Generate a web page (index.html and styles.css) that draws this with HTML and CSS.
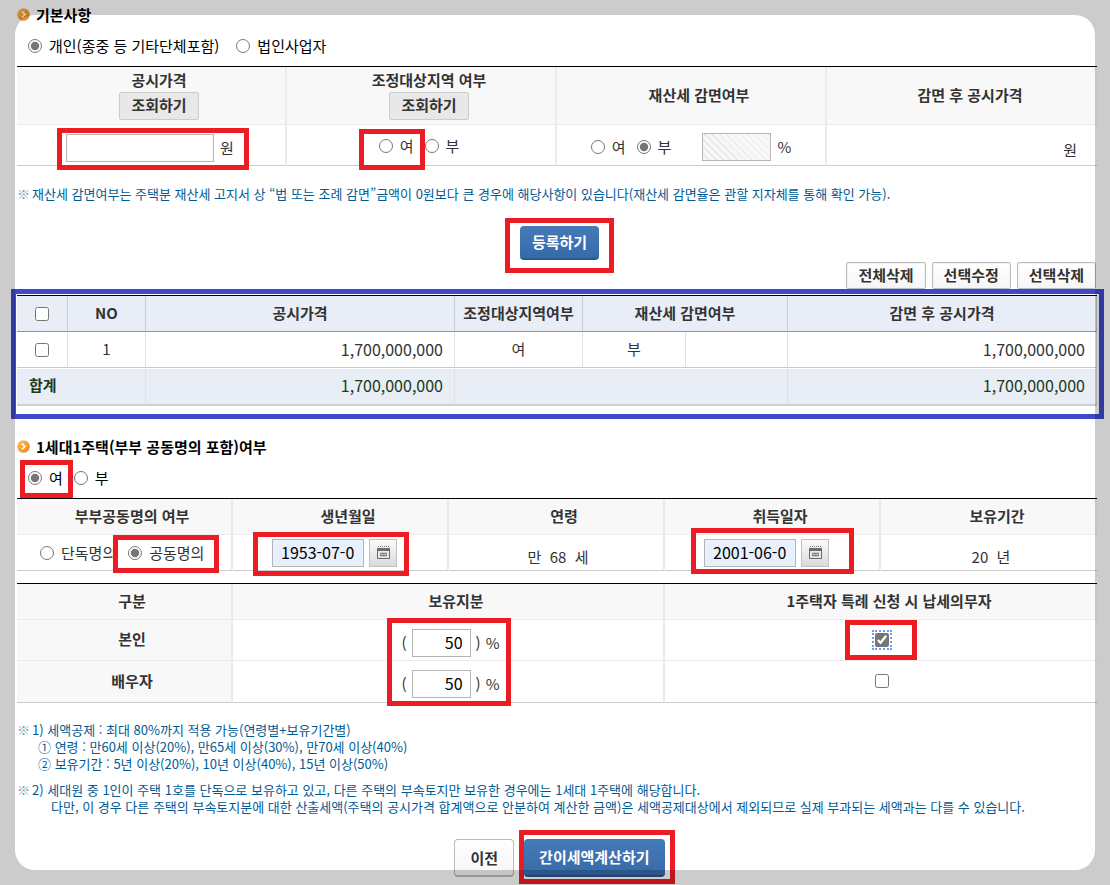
FILE: index.html
```html
<!DOCTYPE html>
<html lang="ko">
<head>
<meta charset="utf-8">
<title>종합부동산세 간이세액계산</title>
<link rel="stylesheet" href="styles.css">
</head>
<body>
<svg class="defs" aria-hidden="true">
  <defs>
    <linearGradient id="orange" x1="0" y1="0" x2="1" y2="1">
      <stop offset="0" stop-color="#ffc35a"/><stop offset="1" stop-color="#ef7f12"/>
    </linearGradient>
    <symbol id="bullet" viewBox="0 0 13 13">
      <circle cx="6.5" cy="6.5" r="6.3" fill="url(#orange)"/>
      <path d="M5 3.6 8 6.5 5 9.4" fill="none" stroke="#fff" stroke-width="1.7"/>
    </symbol>
    <symbol id="calendar" viewBox="0 0 13 13">
      <path d="M1 .5h11" stroke="#777" stroke-dasharray="1 1"/>
      <path fill="#6b6b6b" fill-rule="evenodd" d="M0 2h13v11H0zM1 5v7h11V5z"/>
      <path d="M3 7.500h7M3 9.500h7" stroke="#777" stroke-width="1.500"/>
      <path d="M5 6v5M8 6v5" stroke="#ccc" stroke-width=".5"/>
    </symbol>
  </defs>
</svg>
<main class="page">
  <h2 class="title"><svg class="bullet"><use href="#bullet"/></svg>기본사항</h2>
  <div class="choices">
    <label class="option"><input type="radio" name="owner" checked>개인(종중 등 기타단체포함)</label>
    <label class="option"><input type="radio" name="owner">법인사업자</label>
  </div>

  <table class="grid">
    <thead>
      <tr class="row-head-tall">
        <th><div class="stack">공시가격<button class="btn btn-flat" type="button">조회하기</button></div></th>
        <th><div class="stack">조정대상지역 여부<button class="btn btn-flat" type="button">조회하기</button></div></th>
        <th>재산세 감면여부</th>
        <th>감면 후 공시가격</th>
      </tr>
    </thead>
    <tbody>
      <tr class="row-tall">
        <td class="c-money"><div class="field mark mark-price"><input class="text price" type="text" aria-label="공시가격"><span>원</span></div></td>
        <td class="c-pair"><div class="field pair">
          <label class="option mark mark-area"><input type="radio" name="area">여</label>
          <label class="option"><input type="radio" name="area">부</label></div></td>
        <td class="c-rate"><div class="field reduction">
          <label class="option"><input type="radio" name="cut">여</label>
          <label class="option"><input type="radio" name="cut" checked>부</label>
          <span class="field percent"><input class="text rate" type="text" aria-label="감면율" disabled><span>%</span></span></div></td>
        <td class="unit">원</td>
      </tr>
    </tbody>
  </table>

  <p class="note lead"><span class="ref">※</span>재산세 감면여부는 주택분 재산세 고지서 상 “법 또는 조례 감면”금액이 0원보다 큰 경우에 해당사항이 있습니다(재산세 감면율은 관할 지자체를 통해 확인 가능).</p>

  <div class="actions"><span class="mark mark-add"><button class="btn btn-primary" type="button">등록하기</button></span></div>
  <div class="tools">
    <button class="btn btn-line" type="button">전체삭제</button>
    <button class="btn btn-line" type="button">선택수정</button>
    <button class="btn btn-line" type="button">선택삭제</button>
  </div>

  <div class="mark mark-list">
    <table class="list">
      <colgroup><col class="c-check"><col class="c-no"><col class="c-price"><col class="c-area"><col class="c-cut"><col class="c-cut-rate"><col></colgroup>
      <thead>
        <tr><th><input type="checkbox" aria-label="전체 선택"></th><th>NO</th><th>공시가격</th><th>조정대상지역여부</th><th colspan="2">재산세 감면여부</th><th>감면 후 공시가격</th></tr>
      </thead>
      <tbody>
        <tr><td><input type="checkbox" aria-label="1번 선택"></td><td>1</td><td class="num">1,700,000,000</td><td>여</td><td>부</td><td></td><td class="num">1,700,000,000</td></tr>
      </tbody>
      <tfoot>
        <tr><th colspan="2">합계</th><td class="num">1,700,000,000</td><td colspan="3"></td><td class="num">1,700,000,000</td></tr>
      </tfoot>
    </table>
  </div>

  <h2 class="title second"><svg class="bullet"><use href="#bullet"/></svg>1세대1주택(부부 공동명의 포함)여부</h2>
  <div class="choices tight">
    <label class="option mark mark-single"><input type="radio" name="single" checked>여</label>
    <label class="option"><input type="radio" name="single">부</label>
  </div>

  <table class="grid">
    <thead>
      <tr><th>부부공동명의 여부</th><th>생년월일</th><th>연령</th><th>취득일자</th><th>보유기간</th></tr>
    </thead>
    <tbody>
      <tr>
        <td class="names"><div class="field">
          <label class="option"><input type="radio" name="joint">단독명의</label>
          <label class="option mark mark-joint"><input type="radio" name="joint" checked>공동명의</label></div></td>
        <td class="c-date"><div class="field date mark mark-birth"><input class="text filled" type="text" value="1953-07-01" aria-label="생년월일"><button class="cal" type="button" aria-label="생년월일 달력"><svg><use href="#calendar"/></svg></button></div></td>
        <td class="value">만&nbsp; 68&nbsp; 세</td>
        <td class="c-date"><div class="field date mark mark-buy"><input class="text filled" type="text" value="2001-06-01" aria-label="취득일자"><button class="cal" type="button" aria-label="취득일자 달력"><svg><use href="#calendar"/></svg></button></div></td>
        <td class="value">20&nbsp; 년</td>
      </tr>
    </tbody>
  </table>

  <table class="grid share">
    <colgroup><col class="w1"><col class="w2"><col class="w2"></colgroup>
    <thead>
      <tr><th>구분</th><th>보유지분</th><th>1주택자 특례 신청 시 납세의무자</th></tr>
    </thead>
    <tbody>
      <tr class="row-tall">
        <th>본인</th>
        <td class="c-part"><div class="field part mark mark-part"><span>(</span><input class="text" type="text" value="50" aria-label="본인 보유지분"><span>)</span><span>%</span></div></td>
        <td class="c-payer"><span class="check mark mark-payer"><input class="focused" type="checkbox" checked aria-label="본인 납세의무자"></span></td>
      </tr>
      <tr class="row-tall last">
        <th>배우자</th>
        <td class="c-part"><div class="field part"><span>(</span><input class="text" type="text" value="50" aria-label="배우자 보유지분"><span>)</span><span>%</span></div></td>
        <td class="c-payer"><span class="check"><input type="checkbox" aria-label="배우자 납세의무자"></span></td>
      </tr>
    </tbody>
  </table>

  <div class="note notes">
    <p><span class="ref">※</span>1) 세액공제 : 최대 80%까지 적용 가능(연령별+보유기간별)</p>
    <p class="in1">① 연령 : 만60세 이상(20%), 만65세 이상(30%), 만70세 이상(40%)</p>
    <p class="in1">② 보유기간 : 5년 이상(20%), 10년 이상(40%), 15년 이상(50%)</p>
    <p class="gap"><span class="ref">※</span>2) 세대원 중 1인이 주택 1호를 단독으로 보유하고 있고, 다른 주택의 부속토지만 보유한 경우에는 1세대 1주택에 해당합니다.</p>
    <p class="in2">다만, 이 경우 다른 주택의 부속토지분에 대한 산출세액(주택의 공시가격 합계액으로 안분하여 계산한 금액)은 세액공제대상에서 제외되므로 실제 부과되는 세액과는 다를 수 있습니다.</p>
  </div>

  <div class="actions bottom">
    <button class="btn btn-large" type="button">이전</button>
    <span class="mark mark-calc"><button class="btn btn-primary btn-large" type="button">간이세액계산하기</button></span>
  </div>
</main>
<div class="frame"></div>
</body>
</html>
```
FILE: styles.css
```css
* { box-sizing: border-box; }
body {
  margin: 0;
  background: #fff;
  color: #333;
  font-family: "Noto Sans CJK KR", "Noto Sans", sans-serif;
  font-size: 15px;
  line-height: 20px;
  overflow: hidden;
}
.defs { position: absolute; width: 0; height: 0; }
.page { padding: 5px 13px 8px 17px; }
/* translucent surround over the page edges */
.frame {
  position: fixed;
  inset: 15px;
  border-radius: 20px;
  box-shadow: 0 0 0 60px rgba(0, 0, 0, .2);
  pointer-events: none;
  z-index: 5;
}
h2, p { margin: 0; }
.title { display: flex; align-items: center; gap: 6px; font-size: 15px; line-height: 20px; color: #000; }
.second { margin-top: 31px; }
.bullet { width: 13px; height: 13px; margin-bottom: 2px; }
input[type=radio], input[type=checkbox] { width: 14px; height: 14px; margin: 0; accent-color: #767676; flex: none; }
input[type=checkbox] { vertical-align: middle; }
.choices { display: flex; align-items: center; gap: 17px; height: 41px; padding-left: 11px; color: #000; }
.tight { gap: 11px; }
.option { display: inline-flex; align-items: center; gap: 7px; white-space: nowrap; }

table { width: 100%; border-spacing: 0; table-layout: fixed; border-top: 1px solid #000; }
th, td { padding: 0 0 2px; text-align: center; height: 36px; }
.grid th { background: #f8f8f8; padding-left: 16px; }
.grid td { padding-bottom: 0; }
.grid th, .grid td { border-bottom: 1px solid #ebebeb; border-right: 2px solid #ebebeb; }
.grid th:last-child, .grid td:last-child { border-right: 0; }
.grid tbody tr:last-child > * { border-bottom-color: #ccc; }
.grid .row-head-tall th { height: 58px; }
.grid .row-tall > * { height: 41px; }
.grid .last > * { height: 42px; }
.stack { display: flex; flex-direction: column; align-items: center; gap: 2px; }
.share { margin-top: 12px; }
.w1 { width: 20%; }
.w2 { width: 40%; }

.field { display: inline-flex; align-items: center; gap: 6px; height: 28px; vertical-align: middle; }
.text { height: 28px; border: 1px solid #b5b5b5; background: #fff; color: #000; font: 16px/20px "Noto Sans CJK KR", sans-serif; padding: 0 7px 2px; min-width: 0; }
.price { width: 148px; }
.grid .c-money { padding: 5px 2px 0 0; }
.grid .c-pair { padding: 2px 4px 0 0; }
.grid .c-rate { padding-top: 4px; }
.pair, .reduction { gap: 11px; }
.percent { margin-left: 20px; }
.rate { width: 69px; }
.rate:disabled { background: repeating-linear-gradient(45deg, #f8f8f8 0 4px, #e6e6e6 4px 5px); }
.grid .unit { text-align: right; padding: 10px 20px 0 0; }
.grid .names { text-align: left; padding-left: 23px; }
.names .field { gap: 12px; }
.grid .c-date { padding-right: 11px; }
.date { gap: 5px; }
.date .text { width: 92px; }
.text.filled { background: #e8f0fe; padding: 0 8px 2px; }
.cal { width: 28px; height: 28px; padding: 0; border: 1px solid #c2c2c2; background: linear-gradient(#fbfbfb, #dadada); display: grid; place-items: center; }
.cal svg { width: 13px; height: 13px; }
.grid .value { padding: 9px 0 0 4px; }
.grid .c-part { padding: 5px 0 0 5px; }
.part { gap: 5px; }
.part .text { width: 59px; text-align: right; }
.grid .c-payer { padding: 0 0 4px 2px; }

.list th, .list td { border-right: 1px solid #e0e0e0; border-bottom: 1px solid #c4cad4; }
.list thead th { background: #e8edf6; border-right-color: #c4cdd8; border-bottom-color: #8e9199; }
.list tfoot th, .list tfoot td { height: 38px; padding-bottom: 4px; background: #e8edf6; border-top: 1px solid #fff; border-bottom: 2px solid #c8d0da; color: #1a3a1a; }
.list tfoot th { text-align: left; padding-left: 12px; }
.list .num { text-align: right; padding-right: 11px; font-size: 16px; }
.c-check { width: 51px; }
.c-no { width: 78px; }
.c-price { width: 309px; }
.c-area { width: 128px; }
.c-cut { width: 103px; }
.c-cut-rate { width: 102px; }

.note { font-size: 13px; line-height: 17px; color: #005b95; }
.ref { color: #7d9dbb; margin-right: 2px; }
.lead { margin-top: 19px; }
.notes { margin-top: 18px; }
.in1 { padding-left: 21px; }
.in2 { padding-left: 34px; }
.gap { margin-top: 9px; }

.btn { font: bold 15px/20px "Noto Sans CJK KR", sans-serif; color: #333; padding: 0 11px 2px; height: 27px; white-space: nowrap; border: 1px solid #bbb; border-radius: 2px; background: linear-gradient(#fff, #f6f6f6); }
.btn-flat { height: 28px; background: #e8e8e8; border-color: #ccc; }
.btn.btn-primary { height: 34px; color: #fff; border: 0; border-bottom: 2px solid #2a5790; border-radius: 4px; background: linear-gradient(#457ab9, #376aa8); padding: 0 12px; }
.btn.btn-large { height: 38px; border-radius: 4px; padding: 0 15px; border-bottom-width: 2px; }
.actions { display: flex; justify-content: center; gap: 10px; margin-top: 24px; padding-left: 5px; }
.tools { display: flex; justify-content: flex-end; gap: 6px; margin: 2px 1px 6px 0; }
.btn-line { box-shadow: inset 0 0 0 1px #f4f4f4; }

/* highlight boxes drawn round the steps to fill in */
.mark { position: relative; }
.mark::after { content: ""; position: absolute; border: 5px solid #ed1c24; pointer-events: none; z-index: 2; }
.mark-price::after { inset: -6px -15px -8px -9px; }
.mark-area::after { inset: -7px -11px -14px -20px; }
.mark-add::after { inset: -8px -15px -13px -15px; }
.mark-list::after { inset: -6px -7px -13px -6px; border-color: #3f48cc; }
.mark-single::after { inset: -8px -10px -10px -8px; }
.mark-joint::after { inset: -8px -15px -10px -15px; }
.mark-birth::after { inset: -7px -12px -9px -19px; }
.mark-buy::after { inset: -11px -25px -7px -13px; }
.mark-part::after { inset: -11px -12px -49px -15px; }
.mark-payer::after { inset: -13px -28px -13px -30px; }
.mark-calc::after { inset: -9px -10px -7px -5px; }
.mark-add, .mark-calc { display: flex; }
.check { display: inline-flex; vertical-align: middle; }
.focused { outline: 2px dotted #6a9cf0; outline-offset: 1px; }
```
